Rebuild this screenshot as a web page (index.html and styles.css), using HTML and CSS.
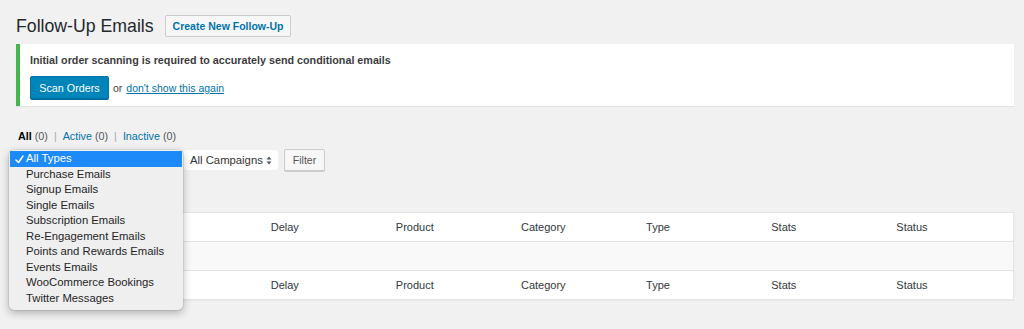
FILE: index.html
```html
<!DOCTYPE html>
<html lang="en">
<head>
    <meta charset="UTF-8">
    <meta name="viewport" content="width=device-width, initial-scale=1.0">
    <title>Follow-Up Emails</title>
    <link rel="stylesheet" href="styles.css">
</head>
<body>
    <div class="wrap">
        <div class="title-row">
            <h1>Follow-Up Emails</h1>
            <a href="#" class="page-title-action">Create New Follow-Up</a>
        </div>

        <div class="notice">
            <p class="notice-text">Initial order scanning is required to accurately send conditional emails</p>
            <p class="notice-actions">
                <button type="button" class="btn-primary">Scan Orders</button>
                <span class="or">or</span>
                <a href="#" class="dismiss">don't show this again</a>
            </p>
        </div>

        <ul class="subsubsub">
            <li class="current">All <span class="count">(0)</span></li>
            <li class="sep">|</li>
            <li><a href="#">Active <span class="count">(0)</span></a></li>
            <li class="sep">|</li>
            <li><a href="#">Inactive <span class="count">(0)</span></a></li>
        </ul>

        <div class="filters">
            <div class="select-wrap">
                <!-- the native select sits under its open menu -->
                <div class="select select-types"></div>
                <div class="popup">
                    <div class="popup-item selected">
                        <svg class="check" width="9" height="9" viewBox="0 0 9 9"><path d="M1 5 L3.5 7.5 L8 1" fill="none" stroke="#fff" stroke-width="1.5" stroke-linecap="round" stroke-linejoin="round"/></svg>
                        All Types
                    </div>
                    <div class="popup-item">Purchase Emails</div>
                    <div class="popup-item">Signup Emails</div>
                    <div class="popup-item">Single Emails</div>
                    <div class="popup-item">Subscription Emails</div>
                    <div class="popup-item">Re-Engagement Emails</div>
                    <div class="popup-item">Points and Rewards Emails</div>
                    <div class="popup-item">Events Emails</div>
                    <div class="popup-item">WooCommerce Bookings</div>
                    <div class="popup-item">Twitter Messages</div>
                </div>
            </div>
            <div class="select select-campaigns">
                All Campaigns
                <svg class="arrows" width="6" height="9" viewBox="0 0 6 9"><path d="M0.5 3.5 L3 0.5 L5.5 3.5 Z M0.5 5.5 L3 8.5 L5.5 5.5 Z" fill="#555"/></svg>
            </div>
            <button type="button" class="btn">Filter</button>
        </div>

        <table class="list-table">
            <thead>
                <tr>
                    <th class="col-name"></th>
                    <th>Delay</th>
                    <th>Product</th>
                    <th>Category</th>
                    <th>Type</th>
                    <th>Stats</th>
                    <th>Status</th>
                </tr>
            </thead>
            <tbody>
                <tr class="no-items">
                    <td colspan="7"></td>
                </tr>
            </tbody>
            <tfoot>
                <tr>
                    <th class="col-name"></th>
                    <th>Delay</th>
                    <th>Product</th>
                    <th>Category</th>
                    <th>Type</th>
                    <th>Stats</th>
                    <th>Status</th>
                </tr>
            </tfoot>
        </table>
    </div>
</body>
</html>
```

FILE: styles.css
```css
body {
    font-family: 'Liberation Sans', Arial, sans-serif;
    font-size: 10.5px;
    background-color: #f1f1f1;
    color: #444;
    margin: 0;
}

.wrap {
    padding: 14px 10px 20px 16px;
}

.title-row {
    display: flex;
    align-items: center;
    height: 24px;
}

.title-row h1 {
    margin: 0;
    font-size: 17.7px;
    font-weight: 400;
    color: #23282d;
    line-height: 24px;
}

.page-title-action {
    margin-left: 11px;
    height: 20px;
    padding: 0 7px;
    display: flex;
    align-items: center;
    border: 1px solid #ccc;
    border-radius: 2px;
    background-color: #f7f7f7;
    color: #0073aa;
    font-weight: 700;
    font-size: 10.5px;
    text-decoration: none;
}

.notice {
    margin-top: 6px;
    height: 62px;
    box-sizing: border-box;
    background-color: #fff;
    border-left: 4px solid #46b450;
    box-shadow: 0 1px 1px rgba(0, 0, 0, 0.06);
    padding: 10px 11px 7px 10px;
}

.notice p {
    margin: 0;
}

.notice-text {
    font-weight: 700;
    font-size: 10.75px;
    line-height: 13px;
    color: #3c3c3c;
}

.notice-actions {
    display: flex;
    align-items: center;
    margin-top: 9px !important;
}

.btn-primary {
    width: 79px;
    height: 23px;
    padding: 0;
    border: 1px solid #0073aa;
    border-radius: 2px;
    background-color: #0085ba;
    color: #fff;
    font-family: inherit;
    font-size: 10.75px;
    box-shadow: 0 1px 0 #006799;
}

.or {
    margin: 0 4px;
    color: #444;
}

.dismiss {
    color: #0073aa;
    text-decoration: underline;
}

.subsubsub {
    list-style: none;
    margin: 23px 0 0 2px;
    padding: 0;
    display: flex;
    line-height: 14px;
    font-size: 10.75px;
    color: #666;
}

.subsubsub li.current {
    color: #000;
    font-weight: 700;
}

.subsubsub .count {
    font-weight: 400;
    color: #555;
}

.subsubsub a {
    color: #0073aa;
    text-decoration: none;
}

.subsubsub .sep {
    color: #aaa;
    margin: 0 6px;
}

.filters {
    margin-top: 6px;
    display: flex;
    gap: 6px;
    height: 22px;
    align-items: center;
}

.select-wrap {
    position: relative;
}

.select {
    height: 20px;
    box-sizing: border-box;
    display: flex;
    align-items: center;
    background-color: #fff;
    border-radius: 3px;
    color: #333;
    font-size: 11.3px;
    padding: 0 6px;
}

.select-types {
    width: 162px;
}

.select-campaigns {
    width: 94px;
    justify-content: space-between;
}

.btn {
    width: 41px;
    height: 22px;
    padding: 0;
    border: 1px solid #ccc;
    border-radius: 2px;
    background-color: #f7f7f7;
    color: #555;
    font-family: inherit;
    font-size: 10.5px;
    box-shadow: 0 1px 0 #ccc;
}

.popup {
    position: absolute;
    top: 0;
    left: -7px;
    width: 174px;
    padding: 1px 1px 4px 1px;
    box-sizing: border-box;
    background-color: #efefef;
    border-radius: 5px;
    box-shadow: 0 3px 9px rgba(0, 0, 0, 0.28), 0 0 0 0.5px rgba(0, 0, 0, 0.12);
    z-index: 10;
    font-size: 11.3px;
    color: #262626;
}

.popup-item {
    height: 15.5px;
    line-height: 15.5px;
    padding-left: 16px;
    position: relative;
    white-space: nowrap;
}

.popup-item.selected {
    background-color: #1c8bf9;
    color: #fff;
}

.check {
    position: absolute;
    left: 5px;
    top: 4px;
}

.list-table {
    margin-top: 41px;
    width: 998px;
    border-collapse: collapse;
    table-layout: fixed;
    background-color: #fff;
    border: 1px solid #e5e5e5;
    box-shadow: 0 1px 1px rgba(0, 0, 0, 0.04);
}

.list-table th {
    width: 125px;
    height: 29px;
    box-sizing: border-box;
    padding: 0 8px;
    text-align: left;
    font-weight: 400;
    font-size: 11px;
    color: #32373c;
}

.list-table th.col-name {
    width: 246px;
}

.list-table thead tr {
    border-bottom: 1px solid #e1e1e1;
}

.list-table tfoot tr {
    border-top: 1px solid #e1e1e1;
}

.no-items td {
    height: 28px;
    padding: 0 10px;
    background-color: #f9f9f9;
}
```
